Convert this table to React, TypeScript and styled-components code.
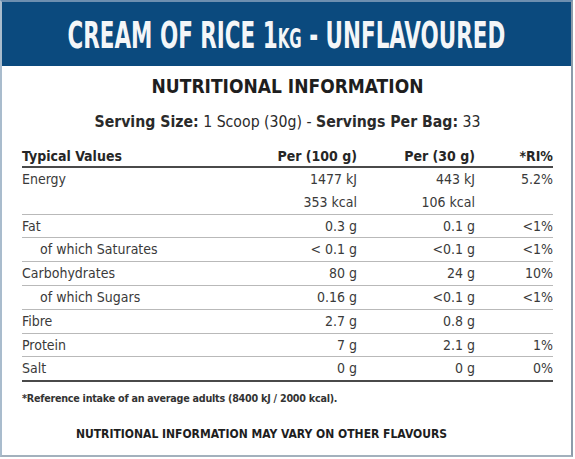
import styled, { createGlobalStyle } from 'styled-components';

const GlobalStyle = createGlobalStyle`
  html, body {
    margin: 0;
    padding: 0;
    background: #ffffff;
  }
`;

type Row = {
  label: string;
  per100: string[];
  perServing: string[];
  ri: string;
  sub?: boolean;
};

const rows: Row[] = [
  { label: 'Energy', per100: ['1477 kJ', '353 kcal'], perServing: ['443 kJ', '106 kcal'], ri: '5.2%' },
  { label: 'Fat', per100: ['0.3 g'], perServing: ['0.1 g'], ri: '<1%' },
  { label: 'of which Saturates', per100: ['< 0.1 g'], perServing: ['<0.1 g'], ri: '<1%', sub: true },
  { label: 'Carbohydrates', per100: ['80 g'], perServing: ['24 g'], ri: '10%' },
  { label: 'of which Sugars', per100: ['0.16 g'], perServing: ['<0.1 g'], ri: '<1%', sub: true },
  { label: 'Fibre', per100: ['2.7 g'], perServing: ['0.8 g'], ri: '' },
  { label: 'Protein', per100: ['7 g'], perServing: ['2.1 g'], ri: '1%' },
  { label: 'Salt', per100: ['0 g'], perServing: ['0 g'], ri: '0%' },
];

const App = () => {
  return (
    <>
      <GlobalStyle />
      <Frame>
        <Header>
          <HeaderTitle>
            CREAM OF RICE 1<Small>KG</Small> - UNFLAVOURED
          </HeaderTitle>
        </Header>
        <Body>
          <Heading>NUTRITIONAL INFORMATION</Heading>
          <Serving>
            <b>Serving Size:</b> 1 Scoop (30g) - <b>Servings Per Bag:</b> 33
          </Serving>
          <Table>
            <HeadRow>
              <Cell>Typical Values</Cell>
              <NumCell>Per (100 g)</NumCell>
              <NumCell>Per (30 g)</NumCell>
              <NumCell>*RI%</NumCell>
            </HeadRow>
            {rows.map((row, i) => (
              <DataRow key={row.label} last={i === rows.length - 1}>
                <Cell sub={row.sub}>{row.label}</Cell>
                <NumCell>
                  {row.per100.map((v) => (
                    <Line key={v}>{v}</Line>
                  ))}
                </NumCell>
                <NumCell>
                  {row.perServing.map((v) => (
                    <Line key={v}>{v}</Line>
                  ))}
                </NumCell>
                <NumCell>{row.ri}</NumCell>
              </DataRow>
            ))}
          </Table>
          <Footnote>*Reference intake of an average adults (8400 kJ / 2000 kcal).</Footnote>
          <Disclaimer>NUTRITIONAL INFORMATION MAY VARY ON OTHER FLAVOURS</Disclaimer>
        </Body>
      </Frame>
    </>
  );
};

export default App;

const Frame = styled.div`
  box-sizing: border-box;
  width: 573px;
  height: 457px;
  border-top: 2px solid #6d8fb0;
  border-left: 2px solid #a9bccd;
  border-right: 2px solid #8d9caa;
  border-bottom: 2px solid #a3b1bd;
  background: #ffffff;
  font-family: 'DejaVu Sans Condensed', 'DejaVu Sans', sans-serif;
  color: #2e2e2e;
`;

const Header = styled.div`
  display: flex;
  align-items: center;
  justify-content: center;
  height: 64px;
  background: #0b4a7e;
  overflow: hidden;
`;

const HeaderTitle = styled.div`
  display: inline-block;
  white-space: nowrap;
  color: #f4f6f8;
  font-family: 'DejaVu Sans Condensed', 'DejaVu Sans', sans-serif;
  font-weight: 700;
  font-size: 37px;
  transform: scaleX(0.645);
  padding-top: 2px;
`;

const Small = styled.span`
  font-size: 26px;
`;

const Body = styled.div`
  display: flex;
  flex-direction: column;
  padding: 0 18px 0 20px;
`;

const Heading = styled.div`
  margin-top: 9px;
  text-align: center;
  font-weight: 700;
  font-size: 19px;
  color: #1e1e1e;
`;

const Serving = styled.div`
  margin-top: 15px;
  text-align: center;
  font-size: 15.7px;
  color: #2a2a2a;

  b {
    font-weight: 700;
  }
`;

const Table = styled.div`
  margin-top: 15px;
  display: flex;
  flex-direction: column;
  font-size: 14px;
`;

const HeadRow = styled.div`
  display: grid;
  grid-template-columns: 225px 110px 118px 78px;
  font-weight: 700;
  line-height: 20px;
  border-bottom: 2px solid #4a4a4a;
  color: #262626;
`;

const DataRow = styled.div<{ last?: boolean }>`
  display: grid;
  grid-template-columns: 225px 110px 118px 78px;
  align-items: start;
  line-height: 22.8px;
  border-bottom: ${({ last }) => (last ? '2px solid #4a4a4a' : '1px solid #b9b9b9')};
  color: #3a3a3a;
`;

const Cell = styled.div<{ sub?: boolean }>`
  padding-left: ${({ sub }) => (sub ? '18px' : '0')};
  white-space: nowrap;
`;

const NumCell = styled.div`
  display: flex;
  flex-direction: column;
  align-items: flex-end;
  white-space: nowrap;
`;

const Line = styled.span``;

const Footnote = styled.div`
  margin-top: 10px;
  font-size: 10.7px;
  font-weight: 700;
  color: #333;
  letter-spacing: -0.25px;
`;

const Disclaimer = styled.div`
  margin-top: 22px;
  padding-right: 52px;
  text-align: center;
  font-size: 12px;
  font-weight: 700;
  color: #1e1e1e;
`;
